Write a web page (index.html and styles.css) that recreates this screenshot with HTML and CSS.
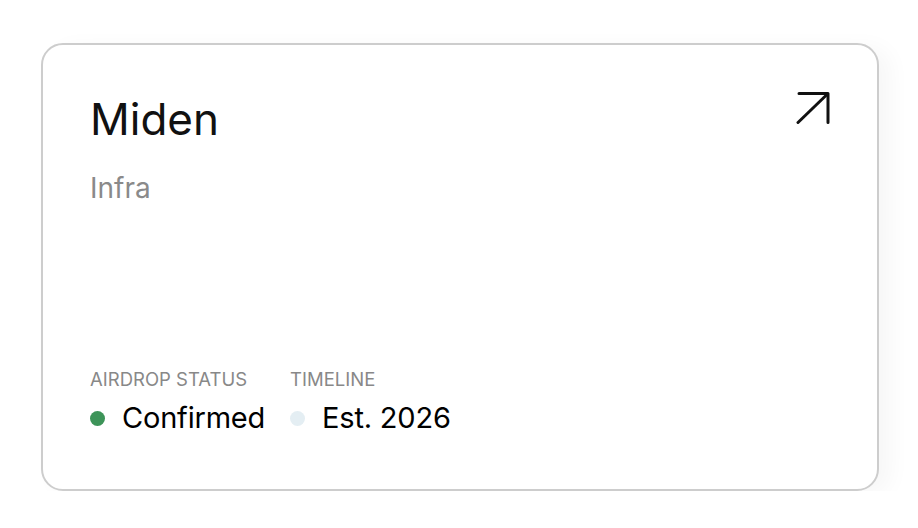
FILE: index.html
```html
<!DOCTYPE html>
<html lang="en">
<head>
  <meta charset="UTF-8" />
  <meta name="viewport" content="width=device-width, initial-scale=1.0"/>
  <title>Miden</title>
  <link rel="stylesheet" href="styles.css">
</head>
<body>

  <article class="card">
    <header class="card-head">
      <h2 class="card-title">Miden</h2>
      <a class="card-link" href="#" aria-label="Open">
        <svg width="34" height="34" viewBox="0 0 34 34" fill="none" stroke="#111" stroke-width="3" stroke-linecap="round" stroke-linejoin="round">
          <path d="M3 2.5H32V31.5"/>
          <path d="M2 31.5L31.5 3"/>
        </svg>
      </a>
    </header>
    <p class="card-tag">Infra</p>

    <div class="stats">
      <div class="stat">
        <span class="stat-label">Airdrop Status</span>
        <span class="stat-value"><i class="dot dot-green"></i>Confirmed</span>
      </div>
      <div class="stat">
        <span class="stat-label">Timeline</span>
        <span class="stat-value"><i class="dot dot-pale"></i>Est. 2026</span>
      </div>
    </div>
  </article>

</body>
</html>
```

FILE: styles.css
```css
body {
  font-family: Inter, 'Noto Sans', sans-serif;
  background-color: #fff;
  color: #111;
  margin: 0;
  padding: 43px 0 0 41px;
}
.card {
  box-sizing: border-box;
  width: 838px;
  height: 448px;
  padding: 48px 47px 53px 47px;
  border: 2px solid #cdcdcd;
  border-radius: 22px;
  background: #fff;
  box-shadow: 12px 4px 22px rgba(0, 0, 0, 0.035);
  display: flex;
  flex-direction: column;
}
.card-head {
  display: flex;
  justify-content: space-between;
  align-items: flex-start;
}
.card-title {
  margin: 0;
  font-size: 44px;
  font-weight: 400;
  line-height: 1.2;
  color: #111;
}
.card-link {
  display: block;
  line-height: 0;
  margin-top: -2px;
}
.card-tag {
  margin: 26px 0 0;
  font-size: 28px;
  line-height: 1.2;
  color: #8a8a8a;
}
.stats {
  margin-top: auto;
  display: flex;
  gap: 25px;
}
.stat {
  display: flex;
  flex-direction: column;
  gap: 11px;
}
.stat-label {
  font-size: 18.5px;
  line-height: 1.2;
  text-transform: uppercase;
  color: #888;
}
.stat-value {
  display: flex;
  align-items: center;
  gap: 17px;
  font-size: 29px;
  line-height: 1.2;
  letter-spacing: -0.2px;
  color: #000;
}
.dot {
  width: 15px;
  height: 15px;
  border-radius: 50%;
  flex-shrink: 0;
}
.dot-green {
  background-color: #3d9459;
}
.dot-pale {
  background-color: #e4eef3;
}
```
